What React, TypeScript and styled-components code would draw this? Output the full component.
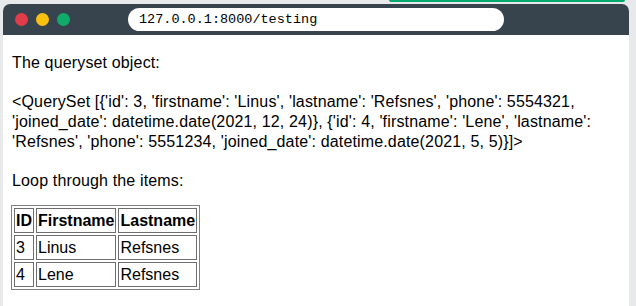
import React from "react";
import styled, { createGlobalStyle } from "styled-components";

const GlobalStyle = createGlobalStyle`
  html, body {
    margin: 0;
    padding: 0;
    background: #e7e9eb;
  }
  #root {
    min-height: 100vh;
    display: flex;
    flex-direction: column;
  }
`;

const Page = styled.div`
  flex: 1;
  display: flex;
  flex-direction: column;
  padding: 0 7px 0 3px;
`;

const TopStrip = styled.div`
  height: 4px;
  display: flex;
`;

const GreenEdge = styled.div`
  margin-left: 386px;
  width: 236px;
  height: 2px;
  background: #04aa6d;
  border-radius: 0 0 2px 2px;
`;

const Frame = styled.div`
  flex: 1;
  display: flex;
  flex-direction: column;
  background: #fff;
  border-radius: 7px 7px 0 0;
  overflow: hidden;
`;

const TitleBar = styled.div`
  height: 31px;
  background: #38444d;
  display: flex;
  align-items: center;
  padding-left: 12px;
`;

const Dot = styled.span<{ $color: string }>`
  width: 13px;
  height: 13px;
  border-radius: 50%;
  background: ${({ $color }) => $color};
  margin-right: 8px;
  flex: none;
`;

const Address = styled.div`
  margin-left: 50px;
  width: 365px;
  height: 23px;
  border-radius: 12px;
  background: #fff;
  display: flex;
  align-items: center;
  padding-left: 11px;
  font-family: "Liberation Mono", "DejaVu Sans Mono", monospace;
  font-size: 13.5px;
  color: #000;
`;

const Content = styled.div`
  padding: 18px 9px 0;
  font-family: "Liberation Sans", Arial, sans-serif;
  font-size: 16px;
  line-height: 20px;
  letter-spacing: 0.15px;
  color: #000;
`;

const P = styled.p<{ $after?: number }>`
  margin: 0 0 ${({ $after }) => $after ?? 19}px;
`;

const Table = styled.table`
  border: 1px solid #808080;
  border-spacing: 2px;
  margin-left: -1px;
  letter-spacing: 0;
`;

const Cell = styled.td<{ $head?: boolean }>`
  border: 1px solid #6e6e6e;
  padding: 1px 1px;
  line-height: 21px;
  font-weight: ${({ $head }) => ($head ? 700 : 400)};
  text-align: left;
`;

const rows = [
  { id: 3, first: "Linus", last: "Refsnes" },
  { id: 4, first: "Lene", last: "Refsnes" },
];

export default function App() {
  return (
    <>
      <GlobalStyle />
      <Page>
        <TopStrip>
          <GreenEdge />
        </TopStrip>
        <Frame>
          <TitleBar>
            <Dot $color="#e23b4a" />
            <Dot $color="#fcc00e" />
            <Dot $color="#0fab6c" />
            <Address>127.0.0.1:8000/testing</Address>
          </TitleBar>
          <Content>
            <P>The queryset object:</P>
            <P>
              &lt;QuerySet [{"{"}'id': 3, 'firstname': 'Linus', 'lastname': 'Refsnes', 'phone': 5554321,
              <br />
              'joined_date': datetime.date(2021, 12, 24){"}"}, {"{"}'id': 4, 'firstname': 'Lene', 'lastname':
              <br />
              'Refsnes', 'phone': 5551234, 'joined_date': datetime.date(2021, 5, 5){"}"}]&gt;
            </P>
            <P $after={14}>Loop through the items:</P>
            <Table>
              <tbody>
                <tr>
                  <Cell as="th" $head>ID</Cell>
                  <Cell as="th" $head>Firstname</Cell>
                  <Cell as="th" $head>Lastname</Cell>
                </tr>
                {rows.map((r) => (
                  <tr key={r.id}>
                    <Cell>{r.id}</Cell>
                    <Cell>{r.first}</Cell>
                    <Cell>{r.last}</Cell>
                  </tr>
                ))}
              </tbody>
            </Table>
          </Content>
        </Frame>
      </Page>
    </>
  );
}
